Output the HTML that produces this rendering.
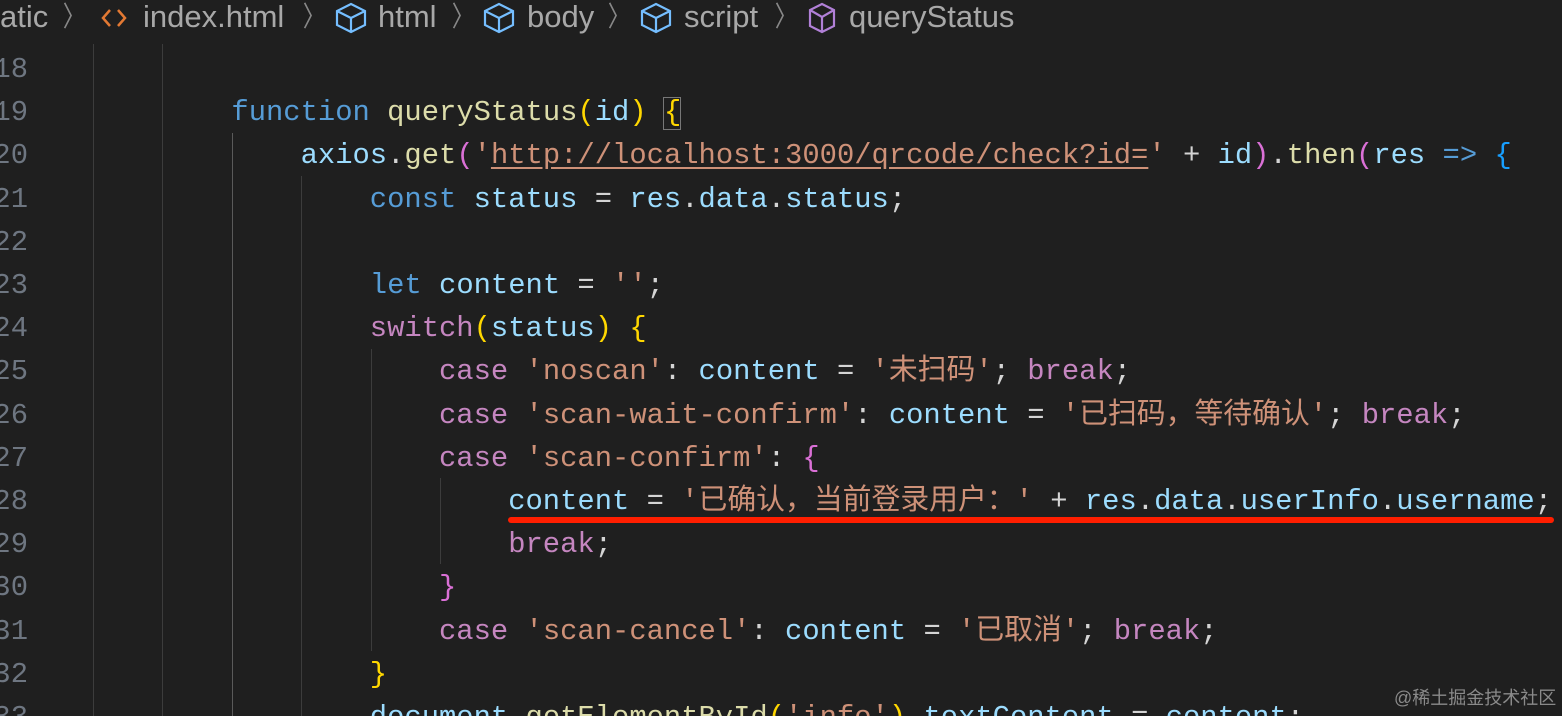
<!DOCTYPE html>
<html style="overflow:hidden"><head><meta charset="utf-8"><style>
html,body{margin:0;width:1562px;height:716px;overflow:hidden}
body{background:#1f1f1f;position:relative;font-family:"Liberation Mono","Noto Sans CJK SC",monospace;}
.bc{position:absolute;top:0;left:0;height:40px;width:1562px;font-family:"Liberation Sans","Noto Sans CJK SC",sans-serif;font-size:31px;color:#a8a8a8;line-height:34px;white-space:nowrap}
.bc span,.bc svg{position:absolute;top:0}
.bc .ch{color:#888;font-size:28px;transform:scaleX(0.8)}
.g{position:absolute;width:1px;background:#3c3c3c}
.ln{position:absolute;left:-8px;width:36px;text-align:right;color:#6e7681;font-size:28.83px;line-height:43.2px}
.c{position:absolute;left:93px;font-size:28.83px;line-height:43.2px;white-space:pre;color:#d4d4d4}
.k{color:#569cd6}.f{color:#dcdcaa}.v{color:#9cdcfe}.s{color:#ce9178}.p{color:#c586c0}
.y{color:#ffd700}.m{color:#da70d6}.b{color:#179fff}
.u{text-decoration:underline;text-underline-offset:4px}
</style></head><body>
<div class="bc">
<span style="left:0">atic</span><span class="ch" style="left:60px">〉</span>
<svg style="left:100px;top:6px" width="28" height="24" viewBox="0 0 28 24"><path d="M10 4 L3 12 L10 20 M18 4 L25 12 L18 20" stroke="#e37933" stroke-width="2.5" fill="none"/></svg>
<span style="left:143px">index.html</span><span class="ch" style="left:300px">〉</span>
<svg style="left:334px;top:2px" width="34" height="32" viewBox="0 0 34 32"><path d="M17 2 L31 9 L31 23 L17 30 L3 23 L3 9 Z M3 9 L17 16 L31 9 M17 16 L17 30" stroke="#75beff" stroke-width="2.2" fill="none"/></svg>
<span style="left:378px">html</span><span class="ch" style="left:449px">〉</span>
<svg style="left:482px;top:2px" width="34" height="32" viewBox="0 0 34 32"><path d="M17 2 L31 9 L31 23 L17 30 L3 23 L3 9 Z M3 9 L17 16 L31 9 M17 16 L17 30" stroke="#75beff" stroke-width="2.2" fill="none"/></svg>
<span style="left:527px">body</span><span class="ch" style="left:605px">〉</span>
<svg style="left:639px;top:2px" width="34" height="32" viewBox="0 0 34 32"><path d="M17 2 L31 9 L31 23 L17 30 L3 23 L3 9 Z M3 9 L17 16 L31 9 M17 16 L17 30" stroke="#75beff" stroke-width="2.2" fill="none"/></svg>
<span style="left:684px">script</span><span class="ch" style="left:772px">〉</span>
<svg style="left:806px;top:2px" width="32" height="32" viewBox="0 0 32 32"><path d="M16 2 L28 8 L28 24 L16 30 L4 24 L4 8 Z M4 8 L16 15 L28 8 M16 15 L16 30" stroke="#b180d7" stroke-width="2.2" fill="none"/></svg>
<span style="left:849px">queryStatus</span>
</div>
<div class="g" style="left:93px;top:44px;height:672px"></div>
<div class="g" style="left:162px;top:44px;height:672px"></div>
<div class="g" style="left:232px;top:133px;height:583px;background:#5a5a5a"></div>
<div class="g" style="left:301px;top:176px;height:540px"></div>
<div class="g" style="left:371px;top:349px;height:302px"></div>
<div class="g" style="left:440px;top:478px;height:86px"></div>
<div style="position:absolute;left:663px;top:97px;width:18px;height:33px;border:1px solid #777;box-sizing:border-box"></div>

<div class="ln" style="top:48px">18</div>
<div class="ln" style="top:91px">19</div>
<div class="ln" style="top:134px">20</div>
<div class="ln" style="top:178px">21</div>
<div class="ln" style="top:221px">22</div>
<div class="ln" style="top:264px">23</div>
<div class="ln" style="top:307px">24</div>
<div class="ln" style="top:350px">25</div>
<div class="ln" style="top:394px">26</div>
<div class="ln" style="top:437px">27</div>
<div class="ln" style="top:480px">28</div>
<div class="ln" style="top:523px">29</div>
<div class="ln" style="top:566px">30</div>
<div class="ln" style="top:610px">31</div>
<div class="ln" style="top:653px">32</div>
<div class="ln" style="top:696px">33</div>

<div class="c" style="top:91px">        <span class="k">function</span> <span class="f">queryStatus</span><span class="y">(</span><span class="v">id</span><span class="y">)</span> <span class="y">{</span></div>
<div class="c" style="top:134px">            <span class="v">axios</span>.<span class="f">get</span><span class="m">(</span><span class="s">'<span class="u">http://localhost:3000/qrcode/check?id=</span>'</span> + <span class="v">id</span><span class="m">)</span>.<span class="f">then</span><span class="m">(</span><span class="v">res</span> <span class="k">=&gt;</span> <span class="b">{</span></div>
<div class="c" style="top:178px">                <span class="k">const</span> <span class="v">status</span> = <span class="v">res</span>.<span class="v">data</span>.<span class="v">status</span>;</div>
<div class="c" style="top:264px">                <span class="k">let</span> <span class="v">content</span> = <span class="s">''</span>;</div>
<div class="c" style="top:307px">                <span class="p">switch</span><span class="y">(</span><span class="v">status</span><span class="y">)</span> <span class="y">{</span></div>
<div class="c" style="top:350px">                    <span class="p">case</span> <span class="s">'noscan'</span>: <span class="v">content</span> = <span class="s">'未扫码'</span>; <span class="p">break</span>;</div>
<div class="c" style="top:394px">                    <span class="p">case</span> <span class="s">'scan-wait-confirm'</span>: <span class="v">content</span> = <span class="s">'已扫码，等待确认'</span>; <span class="p">break</span>;</div>
<div class="c" style="top:437px">                    <span class="p">case</span> <span class="s">'scan-confirm'</span>: <span class="m">{</span></div>
<div class="c" style="top:480px">                        <span class="v">content</span> = <span class="s">'已确认，当前登录用户：'</span> + <span class="v">res</span>.<span class="v">data</span>.<span class="v">userInfo</span>.<span class="v">username</span>;</div>
<div class="c" style="top:523px">                        <span class="p">break</span>;</div>
<div class="c" style="top:566px">                    <span class="m">}</span></div>
<div class="c" style="top:610px">                    <span class="p">case</span> <span class="s">'scan-cancel'</span>: <span class="v">content</span> = <span class="s">'已取消'</span>; <span class="p">break</span>;</div>
<div class="c" style="top:653px">                <span class="y">}</span></div>
<div class="c" style="top:696px">                <span class="v">document</span>.<span class="f">getElementById</span><span class="y">(</span><span class="s">'info'</span><span class="y">)</span>.<span class="v">textContent</span> = <span class="v">content</span>;</div>

<div style="position:absolute;left:508px;top:517px;width:1046px;height:6px;border-radius:3px;background:#ff1e00"></div>
<div style="position:absolute;left:1394px;top:684px;font-family:'Liberation Sans','Noto Sans CJK SC',sans-serif;font-size:18px;color:#8a8a8a;white-space:nowrap">@稀土掘金技术社区</div>
</body></html>
